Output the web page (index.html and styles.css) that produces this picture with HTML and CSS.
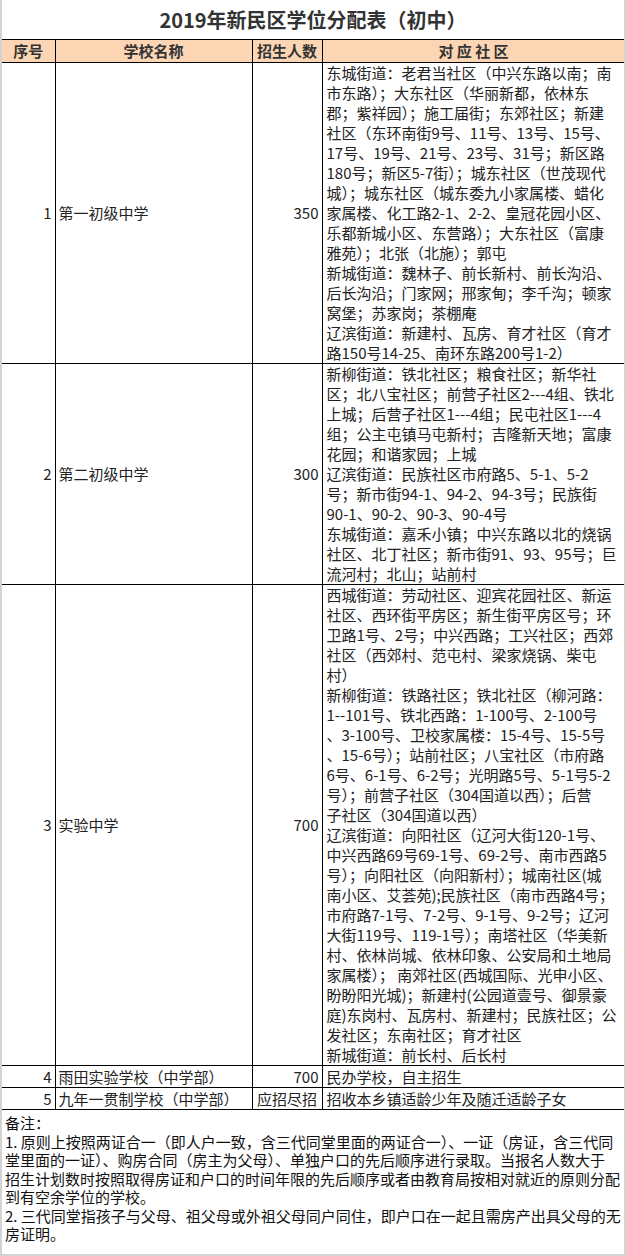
FILE: index.html
```html
<!DOCTYPE html>
<html lang="zh-CN">
<head>
<meta charset="utf-8">
<title>2019年新民区学位分配表（初中）</title>
<link rel="stylesheet" href="styles.css">
</head>
<body>
<div class="page">
  <h1 class="title">2019年新民区学位分配表（初中）</h1>
  <table class="sheet">
    <colgroup>
      <col class="c-no">
      <col class="c-name">
      <col class="c-num">
      <col class="c-area">
    </colgroup>
    <thead>
      <tr>
        <th>序号</th>
        <th>学校名称</th>
        <th>招生人数</th>
        <th>对 应 社 区</th>
      </tr>
    </thead>
    <tbody>
      <tr>
        <td class="no">1</td>
        <td class="name">第一初级中学</td>
        <td class="num">350</td>
        <td class="area">东城街道：老君当社区（中兴东路以南；南<br>市东路）；大东社区（华丽新都，依林东<br>郡；紫祥园）；施工届街；东郊社区；新建<br>社区（东环南街9号、11号、13号、15号、<br>17号、19号、21号、23号、31号；新区路<br>180号；新区5-7街）；城东社区（世茂现代<br>城）；城东社区（城东委九小家属楼、蜡化<br>家属楼、化工路2-1、2-2、皇冠花园小区、<br>乐都新城小区、东营路）；大东社区（富康<br>雅苑）；北张（北施）；郭屯<br>新城街道：魏林子、前长新村、前长沟沿、<br>后长沟沿；门家网；邢家甸；李千沟；顿家<br>窝堡；苏家岗；茶棚庵<br>辽滨街道：新建村、瓦房、育才社区（育才<br>路150号14-25、南环东路200号1-2）</td>
      </tr>
      <tr>
        <td class="no">2</td>
        <td class="name">第二初级中学</td>
        <td class="num">300</td>
        <td class="area">新柳街道：铁北社区；粮食社区；新华社<br>区；北八宝社区；前营子社区2---4组、铁北<br>上城；后营子社区1---4组；民屯社区1---4<br>组；公主屯镇马屯新村；吉隆新天地；富康<br>花园；和谐家园；上城<br>辽滨街道：民族社区市府路5、5-1、5-2<br>号；新市街94-1、94-2、94-3号；民族街<br>90-1、90-2、90-3、90-4号<br>东城街道：嘉禾小镇；中兴东路以北的烧锅<br>社区、北丁社区；新市街91、93、95号；巨<br>流河村；北山；站前村</td>
      </tr>
      <tr>
        <td class="no">3</td>
        <td class="name">实验中学</td>
        <td class="num">700</td>
        <td class="area">西城街道：劳动社区、迎宾花园社区、新运<br>社区、西环街平房区；新生街平房区号；环<br>卫路1号、2号；中兴西路；工兴社区；西郊<br>社区（西郊村、范屯村、梁家烧锅、柴屯<br>村）<br>新柳街道：铁路社区；铁北社区（柳河路：<br>1--101号、铁北西路：1-100号、2-100号<br>、3-100号、卫校家属楼：15-4号、15-5号<br>、15-6号）；站前社区；八宝社区（市府路<br>6号、6-1号、6-2号；光明路5号、5-1号5-2<br>号）；前营子社区（304国道以西）；后营<br>子社区（304国道以西）<br>辽滨街道：向阳社区（辽河大街120-1号、<br>中兴西路69号69-1号、69-2号、南市西路5<br>号）；向阳社区（向阳新村）；城南社区(城<br>南小区、艾荟苑);民族社区（南市西路4号；<br>市府路7-1号、7-2号、9-1号、9-2号；辽河<br>大街119号、119-1号）；南塔社区（华美新<br>村、依林尚城、依林印象、公安局和土地局<br>家属楼）； 南郊社区(西城国际、光申小区、<br>盼盼阳光城)；新建村(公园道壹号、御景豪<br>庭)东岗村、瓦房村、新建村；民族社区；公<br>发社区；东南社区；育才社区<br>新城街道：前长村、后长村</td>
      </tr>
      <tr class="short">
        <td class="no">4</td>
        <td class="name">雨田实验学校（中学部）</td>
        <td class="num">700</td>
        <td class="area">民办学校，自主招生</td>
      </tr>
      <tr class="short">
        <td class="no">5</td>
        <td class="name">九年一贯制学校（中学部）</td>
        <td class="num center">应招尽招</td>
        <td class="area">招收本乡镇适龄少年及随迁适龄子女</td>
      </tr>
    </tbody>
  </table>
  <div class="notes">备注：<br>1. 原则上按照两证合一（即人户一致，含三代同堂里面的两证合一）、一证（房证，含三代同<br>堂里面的一证）、购房合同（房主为父母）、单独户口的先后顺序进行录取。当报名人数大于<br>招生计划数时按照取得房证和户口的时间年限的先后顺序或者由教育局按相对就近的原则分配<br>到有空余学位的学校。<br>2. 三代同堂指孩子与父母、祖父母或外祖父母同户同住，即户口在一起且需房产出具父母的无<br>房证明。</div>
</div>
</body>
</html>
```

FILE: styles.css
```css
html, body {
  margin: 0;
  padding: 0;
  background: #ffffff;
}

.page {
  width: 626px;
  height: 1256px;
  box-sizing: border-box;
  border: 2px solid #d3d3d3;
  border-top: 0;
  font-family: "Noto Sans CJK SC", "Noto Sans", sans-serif;
  color: #222222;
  overflow: hidden;
}

.title {
  margin: 0;
  height: 39px;
  line-height: 40px;
  text-align: center;
  font-size: 20px;
  font-weight: 700;
  color: #333333;
}

.sheet {
  width: 623px;
  border-collapse: collapse;
  table-layout: fixed;
  font-size: 15px;
}

.c-no { width: 53px; }
.c-name { width: 197px; }
.c-num { width: 70px; }
.c-area { width: 303px; }

.sheet th,
.sheet td {
  border: 1px solid #000000;
  padding: 0;
  line-height: 20px;
}

.sheet tr > :first-child { border-left: 0; }

.sheet th {
  background: #fcd5b4;
  height: 22px;
  font-weight: 700;
  color: #333333;
  text-align: center;
  white-space: nowrap;
}

.sheet td {
  vertical-align: middle;
  white-space: nowrap;
}

.no {
  text-align: right;
  padding-right: 3px !important;
}

.name {
  text-align: left;
  padding-left: 3px !important;
}

.num {
  text-align: right;
  padding-right: 3px !important;
}

.num.center {
  text-align: center;
  padding-right: 0 !important;
}

.area {
  padding-left: 4px !important;
  text-align: left;
}

.short td {
  height: 21px;
}

.notes {
  padding: 4px 0 0 3px;
  font-size: 15px;
  line-height: 18.5px;
  white-space: nowrap;
  color: #111111;
}
```
